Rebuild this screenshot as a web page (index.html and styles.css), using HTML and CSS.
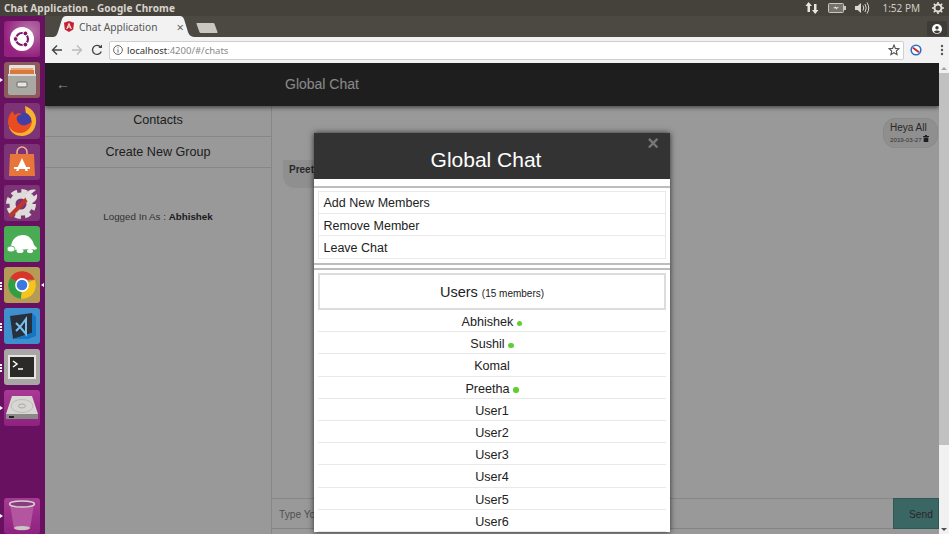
FILE: index.html
```html
<!DOCTYPE html>
<html lang="en">
<head>
    <meta charset="UTF-8">
    <title>Chat Application</title>
    <link rel="stylesheet" href="styles.css">
</head>
<body>
    <div class="topbar">
        <div class="window-title">Chat Application - Google Chrome</div>
        <div class="indicators">
            <svg width="14" height="12" viewBox="0 0 14 12"><path d="M3.5 0 L7 4 H5 V10 H2.5 V4 H0.5 Z M9 2 H11.5 V8 H13.5 L10.2 12 L7 8 H9 Z" fill="#e8e6e0"/></svg>
            <svg width="18" height="10" viewBox="0 0 18 10"><rect x="0.5" y="0.5" width="15" height="9" rx="1" fill="#77736b" stroke="#c9c6bf"/><rect x="16" y="3" width="2" height="4" fill="#c9c6bf"/><path d="M5 5 L8 3.5 V4.6 L11 4 L8 6.5 V5.4 Z" fill="#eee"/></svg>
            <svg width="15" height="12" viewBox="0 0 15 12"><path d="M0 4 H2.5 L6 1 V11 L2.5 8 H0 Z" fill="#d9d6cf"/><path d="M8 3.5 Q9.5 6 8 8.5 M10 2 Q12.5 6 10 10 M12 0.5 Q15.5 6 12 11.5" fill="none" stroke="#d9d6cf"/></svg>
            <span class="clock">1:52 PM</span>
            <svg width="12" height="12" viewBox="0 0 12 12"><circle cx="6" cy="6" r="3.5" fill="none" stroke="#e0ddd6" stroke-width="2"/><path d="M6 0 V2 M6 10 V12 M0 6 H2 M10 6 H12 M1.8 1.8 L3.2 3.2 M8.8 8.8 L10.2 10.2 M1.8 10.2 L3.2 8.8 M8.8 3.2 L10.2 1.8" stroke="#e0ddd6" stroke-width="1.6"/></svg>
        </div>
    </div>

    <div class="desktop">
        <div class="launcher">
            <div class="tile tile-ubuntu">
                <svg width="26" height="26" viewBox="0 0 26 26"><circle cx="13" cy="13" r="12" fill="#fff"/><circle cx="13" cy="13" r="6" fill="none" stroke="#7c1a68" stroke-width="2.2"/><circle cx="6.6" cy="13" r="2.4" fill="#7c1a68" stroke="#fff"/><circle cx="16.4" cy="7.4" r="2.4" fill="#7c1a68" stroke="#fff"/><circle cx="16.4" cy="18.6" r="2.4" fill="#7c1a68" stroke="#fff"/></svg>
            </div>
            <div class="tile tile-files pip">
                <svg width="32" height="32" viewBox="0 0 32 32"><rect x="3" y="1" width="26" height="12" rx="1" fill="#e6e3dd"/><rect x="5" y="4" width="22" height="2" fill="#e9a676"/><rect x="4" y="6" width="24" height="4" fill="#d9793e"/><rect x="2" y="10" width="28" height="21" rx="2" fill="#aaa8a3"/><rect x="2" y="10" width="28" height="2" fill="#dddbd6"/><rect x="11" y="18" width="10" height="5" rx="1" fill="#e7e5e1" stroke="#6a6965"/></svg>
            </div>
            <div class="tile tile-purple">
                <svg width="32" height="32" viewBox="0 0 32 32"><path d="M19 1 C27 4 31 10 30 18 C29 26 23 31 16 31 C10 31 5 28 3 22 L20 10 Z" fill="#f7b32b"/><circle cx="17" cy="16" r="8.5" fill="#3f3fa6"/><path d="M2 18 C2 12 4 8 7 6 C7 8 8 9 9 10 C11 8 14 8 16 9 C12 10 10 12 11 15 C12 19 16 21 20 20 C23 19 25 17 26 15 C26 22 21 28 14 28 C8 28 3 24 2 18 Z" fill="#ea4b1f"/></svg>
            </div>
            <div class="tile tile-purple">
                <svg width="30" height="32" viewBox="0 0 30 32"><path d="M10 9 V6 A5 5 0 0 1 20 6 V9" fill="none" stroke="#f0b48a" stroke-width="1.5"/><path d="M3 8 H27 L28 30 H2 Z" fill="#e8763a"/><path d="M15 12 L21 25 H18.5 L17.5 22 H12.5 L11.5 25 H9 Z" fill="#fff"/><path d="M7 21 H23 V23 H7 Z" fill="#fff"/></svg>
            </div>
            <div class="tile tile-purple">
                <svg width="34" height="34" viewBox="0 0 34 34"><circle cx="16" cy="18" r="8.5" fill="none" stroke="#dedcd8" stroke-width="6"/><circle cx="16" cy="18" r="13" fill="none" stroke="#dedcd8" stroke-width="4" stroke-dasharray="6 4.2"/><path d="M6 29 L23 12" stroke="#c1362b" stroke-width="4" stroke-linecap="round"/><path d="M21 13 C19 8 24 2 31 4 L26 8 L28 11 L32 8 C33 14 28 19 23 16 Z" fill="#e3e1dd"/></svg>
            </div>
            <div class="tile tile-green">
                <svg width="32" height="22" viewBox="0 0 32 22"><path d="M5 15 C5 6 11 2 17 2 C23 2 27 7 28 12 L31 15 C31 17 28 17 26 16 L9 17 Z" fill="#fff"/><ellipse cx="5" cy="16" rx="4" ry="3" fill="#fff" stroke="#49ac55" stroke-width="0.8"/><ellipse cx="14" cy="18" rx="3.5" ry="2" fill="#fff"/><ellipse cx="24" cy="18" rx="3" ry="2" fill="#fff"/></svg>
            </div>
            <div class="tile tile-gold pip-double pip-right">
                <svg width="34" height="34" viewBox="0 0 32 32"><path d="M16 16 L4.8 9.5 A13 13 0 0 1 28 11 H16 Z" fill="#d8362a"/><path d="M16 16 L28 11 A13 13 0 0 1 15 29 Z" fill="#f6c51b"/><path d="M16 16 L15 29 A13 13 0 0 1 4.8 9.5 Z" fill="#2f9e44"/><circle cx="16" cy="16" r="6.5" fill="#fff"/><circle cx="16" cy="16" r="5" fill="#3d78e0"/></svg>
            </div>
            <div class="tile tile-blue pip-double">
                <svg width="30" height="30" viewBox="0 0 30 30"><path d="M3 5 L25 2 V22 L6 28 Z" fill="#26313c"/><path d="M25 2 L29 6 V25 L21 28 L6 28 L25 22 Z" fill="#1576c4"/><path d="M9 12 L13 16 L9 20 M19 8 L13 16 L19 23 Z" fill="none" stroke="#7cc0ef" stroke-width="2"/></svg>
            </div>
            <div class="tile tile-grey pip-double">
                <svg width="30" height="26" viewBox="0 0 30 26"><rect x="1" y="1" width="28" height="24" fill="#e5e4e1"/><rect x="3" y="3" width="24" height="20" fill="#2b2a29"/><path d="M6 7 L10 10 L6 13" fill="none" stroke="#fff" stroke-width="1.5"/><path d="M11 15 H16" stroke="#fff" stroke-width="1.5"/></svg>
            </div>
            <div class="tile tile-pink pip">
                <svg width="34" height="26" viewBox="0 0 34 26"><path d="M7 1 H27 L33 19 V24 H1 V19 Z" fill="#d7d6d3"/><ellipse cx="17" cy="11" rx="11" ry="6.5" fill="none" stroke="#bdbcb8"/><ellipse cx="17" cy="11" rx="3.5" ry="2" fill="none" stroke="#a9a8a4"/><rect x="1" y="19" width="32" height="5" fill="#8a8987"/><rect x="4" y="21" width="5" height="2" fill="#222"/></svg>
            </div>
            <div class="launcher-space"></div>
            <div class="tile tile-pink pip">
                <svg width="28" height="32" viewBox="0 0 28 32"><path d="M2 4 L6 29 Q14 32 22 29 L26 4 Z" fill="#b3559f"/><ellipse cx="14" cy="4" rx="12.5" ry="3" fill="#8a3c80" stroke="#d6d3cf" stroke-width="1.5"/><ellipse cx="14" cy="28" rx="8" ry="2" fill="#c9c7c3"/></svg>
            </div>
        </div>

        <div class="browser">
            <div class="tabstrip">
                <div class="tab">
                    <svg class="tab-shape" width="144" height="21" viewBox="0 0 144 21"><path d="M0 21 C4 21 5 19 6 16 L10 3 C11 1 12 0 14 0 H128 C130 0 131 1 132 3 L136 16 C137 19 139 21 144 21 Z" fill="#f2f2f2"/></svg>
                    <svg class="favicon" width="10" height="11" viewBox="0 0 10 11"><path d="M5 0 L10 1.8 L9.2 8.5 L5 11 L0.8 8.5 L0 1.8 Z" fill="#c3222f"/><path d="M5 1.6 L7.8 8 H6.7 L6.1 6.5 H3.9 L3.3 8 H2.2 Z M5 3.8 L4.3 5.6 H5.7 Z" fill="#fff"/></svg>
                    <span class="tab-title">Chat Application</span>
                    <span class="tab-close">×</span>
                </div>
                <div class="newtab"></div>
                <div class="profile">
                    <svg width="10" height="10" viewBox="0 0 10 10"><circle cx="5" cy="5" r="5" fill="#fff"/><circle cx="5" cy="3.8" r="1.7" fill="#3f3c37"/><path d="M1.8 8 C2.5 6 7.5 6 8.2 8 L5 9.5 Z" fill="#3f3c37"/></svg>
                </div>
            </div>

            <div class="toolbar">
                <svg width="12" height="12" viewBox="0 0 12 12"><path d="M11 6 H2 M6 1.5 L1.5 6 L6 10.5" fill="none" stroke="#444" stroke-width="1.4"/></svg>
                <svg width="12" height="12" viewBox="0 0 12 12"><path d="M1 6 H10 M6 1.5 L10.5 6 L6 10.5" fill="none" stroke="#bbb" stroke-width="1.4"/></svg>
                <svg width="12" height="12" viewBox="0 0 12 12"><path d="M10.2 7.5 A4.5 4.5 0 1 1 9.6 3.2" fill="none" stroke="#444" stroke-width="1.4"/><path d="M7.4 4 H11 V0.6 Z" fill="#444"/></svg>
                <div class="addressbar">
                    <svg width="10" height="10" viewBox="0 0 10 10"><circle cx="5" cy="5" r="4.4" fill="none" stroke="#666"/><path d="M5 4.4 V7.6 M5 2.4 V3.4" stroke="#666"/></svg>
                    <span class="url"><span class="url-host">localhost</span>:4200/#/chats</span>
                    <svg class="star" width="12" height="12" viewBox="0 0 12 12"><path d="M6 1 L7.4 4.4 L11 4.7 L8.3 7 L9.1 10.6 L6 8.7 L2.9 10.6 L3.7 7 L1 4.7 L4.6 4.4 Z" fill="none" stroke="#555" stroke-width="1.1"/></svg>
                </div>
                <svg class="ext" width="12" height="12" viewBox="0 0 12 12"><circle cx="6" cy="6" r="4.8" fill="#fff" stroke="#2a6fc9" stroke-width="1.6"/><path d="M3 3.8 L9 8.2" stroke="#c3272f" stroke-width="2"/></svg>
                <svg class="menu" width="4" height="12" viewBox="0 0 4 12"><circle cx="2" cy="2" r="1.2" fill="#555"/><circle cx="2" cy="6" r="1.2" fill="#555"/><circle cx="2" cy="10" r="1.2" fill="#555"/></svg>
            </div>

            <div class="viewport">
                <div class="page">
                    <div class="navbar">
                        <span class="nav-back">←</span>
                        <span class="nav-title">Global Chat</span>
                    </div>
                    <div class="chat-layout">
                        <div class="sidebar">
                            <div class="side-link">Contacts</div>
                            <div class="side-link side-link-tall">Create New Group</div>
                            <p class="logged-in">Logged In As : <b>Abhishek</b></p>
                        </div>
                        <div class="chat-pane">
                            <div class="messages">
                                <div class="bubble bubble-mine">
                                    <div class="bubble-text">Heya All</div>
                                    <div class="bubble-meta">2019-03-27
                                        <svg width="6" height="7" viewBox="0 0 6 7"><path d="M0 1 H6 V2 H0 Z M2 0 H4 V1 H2 Z M0.7 2.4 H5.3 V7 H0.7 Z" fill="#333"/></svg>
                                    </div>
                                </div>
                                <div class="bubble bubble-other"><b>Preetha</b></div>
                            </div>
                            <div class="composer">
                                <div class="composer-input">Type Your Message</div>
                                <div class="send-btn">Send</div>
                            </div>
                        </div>
                    </div>

                    <div class="backdrop"></div>

                    <div class="modal">
                        <div class="modal-header">
                            <h2>Global Chat</h2>
                            <span class="modal-close">×</span>
                        </div>
                        <div class="rule rule-first"></div>
                        <ul class="action-list">
                            <li>Add New Members</li>
                            <li>Remove Member</li>
                            <li>Leave Chat</li>
                        </ul>
                        <div class="rule rule-double"></div>
                        <div class="rule"></div>
                        <div class="users-head">Users <small>(15 members)</small></div>
                        <ul class="user-list">
                            <li>Abhishek <i class="online"></i></li>
                            <li>Sushil <i class="online"></i></li>
                            <li>Komal</li>
                            <li>Preetha <i class="online"></i></li>
                            <li>User1</li>
                            <li>User2</li>
                            <li>User3</li>
                            <li>User4</li>
                            <li>User5</li>
                            <li>User6</li>
                        </ul>
                    </div>
                </div>
                <div class="scrollbar">
                    <div class="scroll-up"></div>
                    <div class="scroll-thumb"></div>
                    <div class="scroll-down"></div>
                </div>
            </div>
        </div>
    </div>
</body>
</html>
```

FILE: styles.css
```css
html, body {
    margin: 0;
    padding: 0;
    height: 534px;
    overflow: hidden;
}
body {
    font-family: "Liberation Sans", Arial, sans-serif;
    display: flex;
    flex-direction: column;
    background: #3c3b37;
}
.topbar {
    height: 16px;
    flex: none;
    display: flex;
    align-items: center;
    justify-content: space-between;
    background: #45423c;
    color: #d8d4cc;
    font-family: "Noto Sans", sans-serif;
}
.window-title {
    font-size: 10px;
    font-weight: 700;
    padding-left: 4px;
    letter-spacing: 0.1px;
}
.indicators {
    display: flex;
    align-items: center;
    gap: 9px;
    padding-right: 5px;
}
.clock {
    font-size: 10px;
    margin-left: 3px;
    margin-right: 3px;
    color: #d0cdc6;
}
.desktop {
    flex: 1;
    display: flex;
    min-height: 0;
}
.launcher {
    width: 45px;
    flex: none;
    background: #681160;
    display: flex;
    flex-direction: column;
    align-items: center;
    gap: 5px;
    padding-top: 5px;
    box-sizing: border-box;
}
.launcher-space {
    height: 63px;
}
.tile {
    width: 36px;
    height: 36px;
    margin-left: -1px;
    border-radius: 3px;
    display: flex;
    align-items: center;
    justify-content: center;
    position: relative;
    flex: none;
}
.tile-ubuntu { background: radial-gradient(circle at 70% 30%, #b878ac, #96227f 70%); }
.tile-purple { background: #7c3476; }
.tile-files { background: #8c5a5c; }
.tile-green { background: #49ac55; }
.tile-gold { background: #b69b58; }
.tile-blue { background: #3f8fce; }
.tile-grey { background: #a9a7a6; }
.tile-pink { background: linear-gradient(#a83a95, #8f2280); }
.pip::before {
    content: "";
    position: absolute;
    left: -4px;
    top: 16px;
    border-left: 3px solid #fff;
    border-top: 2px solid transparent;
    border-bottom: 2px solid transparent;
}
.pip-double::before {
    content: "";
    position: absolute;
    left: -4px;
    top: 15px;
    width: 2px;
    height: 2px;
    background: #fff;
    box-shadow: 0 3px 0 #fff, 0 6px 0 #fff;
}
.pip-right::after {
    content: "";
    position: absolute;
    right: -4px;
    top: 16px;
    border-right: 3px solid #fff;
    border-top: 2px solid transparent;
    border-bottom: 2px solid transparent;
}
.browser {
    flex: 1;
    min-width: 0;
    display: flex;
    flex-direction: column;
}
.tabstrip {
    height: 21px;
    flex: none;
    display: flex;
    align-items: flex-end;
    background: #4c4942;
    padding-left: 7px;
}
.tab {
    position: relative;
    width: 144px;
    height: 21px;
    display: flex;
    align-items: center;
    font-size: 10.2px;
    color: #555;
    font-family: "Noto Sans", sans-serif;
}
.tab-shape {
    position: absolute;
    left: 0;
    top: 0;
}
.favicon {
    position: relative;
    margin-left: 12px;
}
.tab-title {
    position: relative;
    margin-left: 5px;
    white-space: nowrap;
}
.tab-close {
    position: relative;
    margin-left: 19px;
    font-size: 13px;
    color: #666;
}
.newtab {
    width: 18px;
    height: 10px;
    margin: 0 0 4px 2px;
    background: #c9c7c2;
    transform: skewX(20deg);
    border-radius: 1px;
}
.profile {
    margin-left: auto;
    margin-right: 2px;
    margin-bottom: 1px;
    width: 20px;
    height: 15px;
    display: flex;
    align-items: center;
    justify-content: center;
    background: #3f3c37;
    border-radius: 2px;
}
.toolbar {
    height: 26px;
    flex: none;
    display: flex;
    align-items: center;
    background: #f2f2f2;
    padding-left: 6px;
    box-sizing: border-box;
    gap: 8px;
}
.addressbar {
    width: 795px;
    height: 19px;
    flex: none;
    margin-left: -2px;
    background: #fff;
    border: 1px solid #cfcfcf;
    border-radius: 2px;
    box-sizing: border-box;
    display: flex;
    align-items: center;
    padding: 0 2px 0 3px;
}
.url {
    margin-left: 4px;
    font-size: 9.5px;
    color: #888;
    font-family: "Noto Sans", sans-serif;
}
.url-host {
    color: #333;
}
.star {
    margin-left: auto;
    margin-right: 1px;
}
.ext {
    margin-left: -2px;
}
.menu {
    margin-left: 10px;
}
.viewport {
    flex: 1;
    min-height: 0;
    display: flex;
}
.page {
    flex: 1;
    min-width: 0;
    position: relative;
    overflow: hidden;
    background: #fff;
    display: flex;
    flex-direction: column;
}
.navbar {
    height: 43px;
    flex: none;
    background: #333;
    display: flex;
    align-items: center;
    color: #e4e4e4;
    box-shadow: 0 2px 4px rgba(0, 0, 0, 0.5);
    position: relative;
    padding-bottom: 2px;
    box-sizing: border-box;
}
.nav-back {
    font-size: 14px;
    margin-left: 11px;
}
.nav-title {
    font-size: 14px;
    position: absolute;
    left: 240px;
}
.chat-layout {
    flex: 1;
    min-height: 0;
    display: flex;
}
.sidebar {
    width: 226px;
    flex: none;
    border-right: 1px solid #e2e2e2;
    box-sizing: content-box;
}
.side-link {
    height: 30px;
    line-height: 29px;
    text-align: center;
    font-size: 12.6px;
    color: #333;
    border-bottom: 1px solid #e2e2e2;
}
.side-link-tall {
    height: 30px;
    line-height: 31px;
}
.logged-in {
    margin: 43px 0 0;
    text-align: center;
    font-size: 9.8px;
    color: #555;
}
.logged-in b {
    color: #333;
}
.chat-pane {
    flex: 1;
    min-width: 0;
    display: flex;
    flex-direction: column;
}
.messages {
    flex: 1;
    min-height: 0;
    position: relative;
    display: flex;
    flex-direction: column;
    padding: 12px 1px 0 11px;
}
.bubble {
    background: #eee;
    border-radius: 12px;
    font-size: 10px;
    color: #444;
}
.bubble-mine {
    align-self: flex-end;
    width: 55px;
    height: 30px;
    box-sizing: border-box;
    padding: 3px 0 0 6px;
    border: 1px solid #e6e6e6;
}
.bubble-text {
    line-height: 11px;
}
.bubble-meta {
    font-size: 6.2px;
    color: #555;
    margin-top: 2px;
}
.bubble-other {
    align-self: flex-start;
    width: 80px;
    height: 28px;
    box-sizing: border-box;
    margin-top: 12px;
    padding: 4px 6px;
    border-radius: 0 0 0 12px;
    font-size: 10px;
}
.composer {
    height: 31px;
    flex: none;
    display: flex;
    border-top: 1px solid #e2e2e2;
    margin-bottom: 5px;
    border-bottom: 1px solid #ddd;
    box-sizing: border-box;
}
.composer-input {
    flex: 1;
    font-size: 10.2px;
    color: #888;
    padding: 10px 0 0 7px;
}
.send-btn {
    width: 46px;
    background: #62aaa7;
    border: 1px solid #4f918e;
    box-sizing: border-box;
    font-size: 10.2px;
    color: #444;
    padding: 10px 0 0 15px;
    margin-top: -1px;
    margin-bottom: -1px;
}
.backdrop {
    position: absolute;
    inset: 0;
    background: rgba(0, 0, 0, 0.4);
}
.modal {
    position: absolute;
    left: 269px;
    top: 70px;
    width: 356px;
    background: #fff;
    box-shadow: 0 0 6px rgba(0, 0, 0, 0.7);
    color: #222;
}
.modal-header {
    height: 46px;
    background: #333;
    color: #fff;
    position: relative;
    box-sizing: border-box;
    padding: 15px 12px 0 0;
    text-align: center;
}
.modal-header h2 {
    margin: 0;
    font-size: 21px;
    font-weight: 400;
    line-height: 24px;
}
.modal-close {
    position: absolute;
    right: 11px;
    top: 0;
    font-size: 20px;
    font-weight: 700;
    line-height: 20px;
    color: #777;
}
.rule {
    height: 2px;
    background: #bdbdbd;
    margin-top: 3px;
}
.rule-first {
    margin-top: 7px;
}
.rule-double {
    margin-top: 3.5px;
}
.action-list, .user-list {
    list-style: none;
    margin: 0;
    padding: 0;
}
.action-list {
    margin: 3px 4px 0;
    border: 1px solid #eaeaea;
}
.action-list li {
    height: 22px;
    line-height: 22px;
    font-size: 12.5px;
    padding: 1px 0 0 4.5px;
    box-sizing: border-box;
    border-bottom: 1px solid #eaeaea;
}
.action-list li:first-child {
    padding-top: 0;
}
.action-list li:last-child {
    border-bottom: none;
}
.users-head {
    margin: 3.5px 4px 0;
    height: 37px;
    box-sizing: border-box;
    border: 2px solid #dcdcdc;
    text-align: center;
    font-size: 14.5px;
    line-height: 35px;
}
.users-head small {
    font-size: 10px;
}
.user-list {
    margin: 0 4px;
}
.user-list li {
    height: 22.2px;
    line-height: 22px;
    padding-top: 1px;
    box-sizing: border-box;
    text-align: center;
    font-size: 12.6px;
    border-bottom: 1px solid #e8e8e8;
}
.online {
    display: inline-block;
    width: 5.5px;
    height: 5.5px;
    border-radius: 50%;
    background: #5fcf2d;
    vertical-align: 0;
}
.scrollbar {
    width: 10px;
    flex: none;
    background: #f1f1f1;
    display: flex;
    flex-direction: column;
    align-items: center;
}
.scroll-up {
    margin: 4px 0 3px;
    border-bottom: 3px solid #a3a3a3;
    border-left: 3px solid transparent;
    border-right: 3px solid transparent;
}
.scroll-thumb {
    width: 100%;
    height: 372px;
    background: #c1c1c1;
}
.scroll-down {
    margin-top: auto;
    margin-bottom: 3px;
    border-top: 3px solid #505050;
    border-left: 3px solid transparent;
    border-right: 3px solid transparent;
}
```
